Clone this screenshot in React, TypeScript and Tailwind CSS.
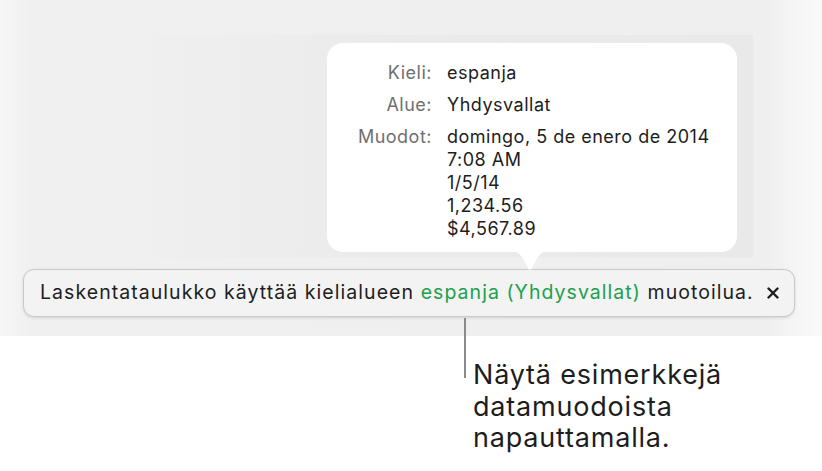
export default function App() {
	const font = { fontFamily: 'Inter, "Noto Sans", sans-serif' };

	return (
		<div className="w-[822px] h-[471px] bg-white overflow-hidden" style={font}>
			<div className="relative h-[336px] bg-[linear-gradient(90deg,#f6f6f6_0%,#f0f0f0_4%,#efefef_93%,#fafafa_100%)] pt-[35px]">
				<div className="ml-[150px] w-[603px] h-[223px] bg-[linear-gradient(90deg,#efefef_0%,#ebebeb_40%,#e9e9e9_100%)]" />

				<div className="ml-[23px] mt-[11px] flex h-[48px] w-[772px] items-center justify-between rounded-[11px] border border-[#c9c9c9] bg-[#f3f3f3] pl-[16px] pr-[14px] shadow-[0_1px_3px_rgba(0,0,0,0.12)]">
					<p className="whitespace-nowrap text-[19.5px] tracking-[1.05px] text-[#1d1d1d]">
						Laskentataulukko käyttää kielialueen{' '}
						<span className="text-[#20a04e]">espanja (Yhdysvallat)</span>{' '}
						muotoilua.
					</p>
					<svg width="12" height="12" viewBox="0 0 12 12" className="mr-[1px]">
						<path d="M1.5 1.5 L10.5 10.5 M10.5 1.5 L1.5 10.5" stroke="#1d1d1d" strokeWidth="2.4" strokeLinecap="round" />
					</svg>
				</div>

				<div className="absolute left-[327px] top-[43px] w-[410px] rounded-[16px] bg-white pt-[18px] pb-[12px]">
					<div className="grid grid-cols-[105px_1fr] gap-x-[15px] gap-y-[9px] text-[18px] leading-[23px] tracking-[0.5px]">
						<span className="text-right text-[#707070]">Kieli:</span>
						<span className="text-[#1d1d1d]">espanja</span>
						<span className="text-right text-[#707070]">Alue:</span>
						<span className="text-[#1d1d1d]">Yhdysvallat</span>
						<span className="text-right text-[#707070]">Muodot:</span>
						<div className="flex flex-col text-[#1d1d1d]">
							<span>domingo, 5 de enero de 2014</span>
							<span>7:08 AM</span>
							<span>1/5/14</span>
							<span>1,234.56</span>
							<span>$4,567.89</span>
						</div>
					</div>
					<svg width="40" height="21" viewBox="0 0 40 21" className="absolute left-[183px] top-full -mt-[1px]">
						<path d="M0 0 C8 0 11 4 15 11 L18 17 C19 19 21 19 22 17 L25 11 C29 4 32 0 40 0 Z" fill="#ffffff" />
					</svg>
				</div>
			</div>

			<div className="ml-[464px] flex">
				<div className="relative -mt-[18px] h-[60px] w-[2px] bg-[#8a8a8a]" />
				<p className="ml-[7px] mt-[23px] text-[27px] leading-[31.5px] tracking-[0.8px] text-[#1d1d1d]">
					Näytä esimerkkejä
					<br />
					datamuodoista
					<br />
					napauttamalla.
				</p>
			</div>
		</div>
	);
}
